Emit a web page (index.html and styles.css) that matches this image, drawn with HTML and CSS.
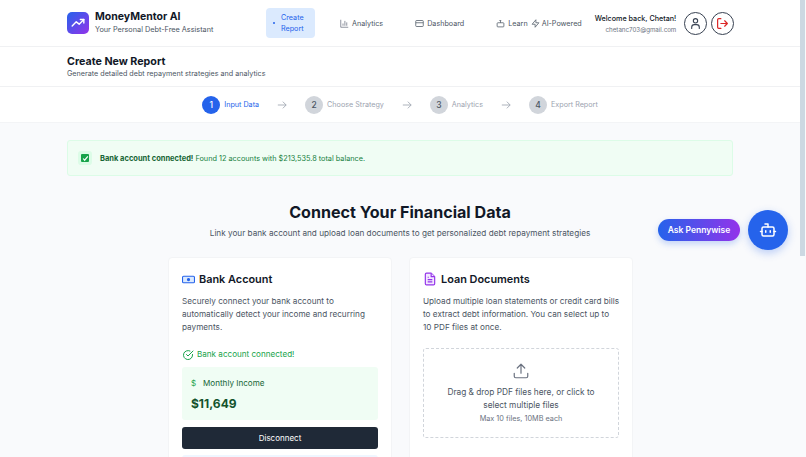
FILE: index.html
```html
<!DOCTYPE html>
<html lang="en">
<head>
  <meta name="viewport" content="width=device-width, initial-scale=1.0">
  <meta charset="UTF-8">
  <title>MoneyMentor AI - Create New Report</title>
  <link rel="stylesheet" href="styles.css">
</head>
<body>
  <div class="page">
    <header class="topbar">
      <div class="brand">
        <div class="brand-logo">
          <svg width="14" height="14" viewBox="0 0 24 24" fill="none" stroke="#fff" stroke-width="2.4" stroke-linecap="round" stroke-linejoin="round"><path d="M2 17l7-7 5 4 8-8"/><path d="M16 6h6v6"/></svg>
        </div>
        <div>
          <div class="brand-name">MoneyMentor AI</div>
          <div class="brand-tag">Your Personal Debt-Free Assistant</div>
        </div>
      </div>
      <nav class="nav">
        <a class="nav-item nav-create"><span class="nav-dot"></span><span>Create<br>Report</span></a>
        <a class="nav-item nav-analytics">
          <svg width="9" height="9" viewBox="0 0 24 24" fill="none" stroke="#6b7280" stroke-width="2"><path d="M2 2v20h20M8 18v-6M13 18V5M18 18v-9"/></svg>
          Analytics
        </a>
        <a class="nav-item nav-dashboard">
          <svg width="9" height="9" viewBox="0 0 24 24" fill="none" stroke="#4b5563" stroke-width="2"><rect x="2" y="4" width="20" height="16" rx="2"/><path d="M2 10h20"/></svg>
          Dashboard
        </a>
        <a class="nav-item nav-learn">
          <svg width="9" height="9" viewBox="0 0 24 24" fill="none" stroke="#4b5563" stroke-width="2"><rect x="3" y="10" width="18" height="11" rx="2"/><path d="M12 10V5M9 4h5"/></svg>
          Learn
        </a>
        <a class="nav-item nav-power">
          <svg width="9" height="9" viewBox="0 0 24 24" fill="none" stroke="#4b5563" stroke-width="2" stroke-linejoin="round"><path d="M13 2v8h8l-10 12v-8H3z"/></svg>
          AI-Powered
        </a>
      </nav>
      <div class="user">
        <div class="user-text">
          <div class="user-name">Welcome back, Chetan!</div>
          <div class="user-mail">chetanc703@gmail.com</div>
        </div>
        <button class="round-btn">
          <svg width="13" height="13" viewBox="0 0 24 24" fill="none" stroke="#374151" stroke-width="2" stroke-linecap="round"><circle cx="12" cy="7" r="4"/><path d="M5 21v-2a5 5 0 0 1 5-5h4a5 5 0 0 1 5 5v2"/></svg>
        </button>
        <button class="round-btn">
          <svg width="13" height="13" viewBox="0 0 24 24" fill="none" stroke="#dc2626" stroke-width="2.2" stroke-linecap="round" stroke-linejoin="round"><path d="M9 3H5a2 2 0 0 0-2 2v14a2 2 0 0 0 2 2h4"/><path d="M9 12h12M16 7l5 5-5 5"/></svg>
        </button>
      </div>
    </header>

    <section class="report-head">
      <h1>Create New Report</h1>
      <p>Generate detailed debt repayment strategies and analytics</p>
    </section>

    <section class="steps">
      <div class="step active"><span class="step-num">1</span>Input Data</div>
      <svg class="step-arrow" width="10" height="10" viewBox="0 0 24 24" fill="none" stroke="#9ca3af" stroke-width="2"><path d="M2 12h20M14 4l8 8-8 8"/></svg>
      <div class="step"><span class="step-num">2</span>Choose Strategy</div>
      <svg class="step-arrow" width="10" height="10" viewBox="0 0 24 24" fill="none" stroke="#9ca3af" stroke-width="2"><path d="M2 12h20M14 4l8 8-8 8"/></svg>
      <div class="step"><span class="step-num">3</span>Analytics</div>
      <svg class="step-arrow" width="10" height="10" viewBox="0 0 24 24" fill="none" stroke="#9ca3af" stroke-width="2"><path d="M2 12h20M14 4l8 8-8 8"/></svg>
      <div class="step"><span class="step-num">4</span>Export Report</div>
    </section>

    <main class="content">
      <div class="alert">
        <span class="alert-check">
          <svg width="7" height="7" viewBox="0 0 24 24" fill="none" stroke="#fff" stroke-width="4"><path d="M4 12l5 6L20 5"/></svg>
        </span>
        <span><b>Bank account connected!</b> Found 12 accounts with $213,535.8 total balance.</span>
      </div>

      <h2 class="title">Connect Your Financial Data</h2>
      <p class="subtitle">Link your bank account and upload loan documents to get personalized debt repayment strategies</p>

      <div class="cards">
        <div class="card">
          <h3 class="card-title">
            <svg width="13" height="13" viewBox="0 0 24 24" fill="#dbeafe" stroke="#2563eb" stroke-width="2"><rect x="1" y="6" width="22" height="12" rx="2"/><circle cx="12" cy="12" r="2" fill="#2563eb"/><path d="M6 12h.01M18 12h.01"/></svg>
            Bank Account
          </h3>
          <p class="card-text">Securely connect your bank account to automatically detect your income and recurring payments.</p>
          <div class="connected">
            <svg width="12" height="12" viewBox="0 0 24 24" fill="none" stroke="#16a34a" stroke-width="2" stroke-linecap="round" stroke-linejoin="round"><path d="M21 11v1a9 9 0 1 1-5-8"/><path d="M9 11l3 3L22 4"/></svg>
            Bank account connected!
          </div>
          <div class="income">
            <div class="income-label"><span class="income-sign">$</span>Monthly Income</div>
            <div class="income-value">$11,649</div>
          </div>
          <button class="disconnect">Disconnect</button>
          <div class="next-box"></div>
        </div>

        <div class="card">
          <h3 class="card-title">
            <svg width="14" height="14" viewBox="0 0 24 24" fill="#f3e8ff" stroke="#9333ea" stroke-width="2" stroke-linejoin="round"><path d="M14 2H6a2 2 0 0 0-2 2v16a2 2 0 0 0 2 2h12a2 2 0 0 0 2-2V8z"/><path d="M14 2v6h6M8 13h8M8 17h8M8 9h2"/></svg>
            Loan Documents
          </h3>
          <p class="card-text">Upload multiple loan statements or credit card bills to extract debt information. You can select up to 10&nbsp;PDF files at once.</p>
          <div class="dropzone">
            <svg width="18" height="18" viewBox="0 0 24 24" fill="none" stroke="#6b7280" stroke-width="1.6" stroke-linecap="round" stroke-linejoin="round"><path d="M21 15v4a2 2 0 0 1-2 2H5a2 2 0 0 1-2-2v-4"/><path d="M17 8l-5-5-5 5M12 3v12"/></svg>
            <div class="drop-text">Drag &amp; drop PDF files here, or click to select multiple files</div>
            <div class="drop-note">Max 10 files, 10MB each</div>
          </div>
        </div>
      </div>
    </main>

    <button class="ask-pill">Ask Pennywise</button>
    <button class="bot-btn">
      <svg width="18" height="18" viewBox="0 0 24 24" fill="none" stroke="#fff" stroke-width="2" stroke-linecap="round" stroke-linejoin="round"><path d="M12 8V4H8"/><rect x="4" y="8" width="16" height="12" rx="2"/><path d="M2 14h2M20 14h2M15 13v2M9 13v2"/></svg>
    </button>
  </div>
  <div class="scroll-rail"></div>
</body>
</html>
```

FILE: styles.css
```css
html, body {
  height: 100%;
}

body {
  margin: 0;
  background: #f9fafc;
  font-family: "Inter", "Liberation Sans", sans-serif;
  color: #111827;
  overflow: hidden;
  display: flex;
  align-items: flex-start;
}

.page {
  position: relative;
  width: 800px;
  flex: none;
}

.scroll-rail {
  width: 5px;
  height: 256px;
  background: #ccd8e2;
}

.topbar {
  height: 46px;
  background: #fff;
  border-bottom: 1px solid #f0f1f3;
  display: flex;
  align-items: center;
  padding-left: 67px;
}

.brand {
  display: flex;
  align-items: center;
  gap: 6px;
  width: 199px;
}

.brand-logo {
  width: 22px;
  height: 22px;
  border-radius: 5px;
  background: linear-gradient(135deg, #2563eb, #9333ea);
  display: flex;
  align-items: center;
  justify-content: center;
}

.brand-name {
  font-size: 10.5px;
  font-weight: 700;
  line-height: 14px;
}

.brand-tag {
  font-size: 7.3px;
  line-height: 12px;
  color: #4b5563;
}

.nav {
  display: flex;
  align-items: center;
}

.nav-item {
  display: flex;
  align-items: center;
  gap: 3px;
  font-size: 7.2px;
  color: #4b5563;
}

.nav-create {
  width: 49px;
  height: 30px;
  box-sizing: border-box;
  padding-left: 7px;
  gap: 6px;
  border-radius: 4px;
  background: #dbeafe;
  color: #2563eb;
  line-height: 11px;
}

.nav-dot {
  width: 2px;
  height: 2px;
  border-radius: 50%;
  background: #2563eb;
}

.nav-analytics {
  margin-left: 25px;
}

.nav-dashboard {
  margin-left: 32px;
}

.nav-learn {
  margin-left: 32px;
}

.nav-power {
  margin-left: 3px;
  gap: 2px;
}

.user {
  display: flex;
  align-items: center;
  margin-left: 13px;
}

.user-text {
  text-align: right;
  margin-right: 8px;
}

.user-name {
  font-size: 7.2px;
  line-height: 12px;
  font-weight: 500;
}

.user-mail {
  font-size: 6.2px;
  line-height: 9px;
  color: #6b7280;
}

.round-btn {
  width: 23px;
  height: 23px;
  padding: 0;
  margin-right: 4px;
  border: 1px solid #374151;
  border-radius: 50%;
  background: #fff;
  display: flex;
  align-items: center;
  justify-content: center;
}

.report-head {
  height: 39px;
  background: #fff;
  border-bottom: 1px solid #f0f1f3;
  padding-left: 67px;
}

.report-head h1 {
  margin: 0;
  padding-top: 8px;
  font-size: 10.7px;
  line-height: 13px;
  font-weight: 700;
}

.report-head p {
  margin: 0;
  font-size: 7.2px;
  line-height: 12px;
  color: #4b5563;
}

.steps {
  height: 35px;
  background: #fff;
  border-bottom: 1px solid #f3f4f6;
  display: flex;
  align-items: center;
  justify-content: center;
  font-size: 7.2px;
  color: #9ca3af;
  gap: 18px;
}

.step {
  display: flex;
  align-items: center;
  gap: 4px;
}

.step-num {
  width: 18px;
  height: 18px;
  border-radius: 50%;
  background: #d1d5db;
  color: #4b5563;
  display: flex;
  align-items: center;
  justify-content: center;
  font-size: 8.5px;
  font-weight: 500;
}

.step.active {
  color: #2563eb;
}

.step.active .step-num {
  background: #2563eb;
  color: #fff;
}

.content {
  padding: 17px 67px 0;
}

.alert {
  height: 34px;
  background: #f0fdf4;
  border: 1px solid #dcfce7;
  border-radius: 3px;
  display: flex;
  align-items: center;
  gap: 11px;
  padding-left: 13px;
  font-size: 7.3px;
  color: #15803d;
}

.alert b {
  font-size: 7.5px;
  color: #166534;
}

.alert-check {
  width: 8px;
  height: 8px;
  border-radius: 1px;
  background: #16a34a;
  box-shadow: 0 0 0 3px #dcfce7;
  display: flex;
  align-items: center;
  justify-content: center;
}

.title {
  margin: 26px 0 0;
  text-align: center;
  font-size: 16.1px;
  line-height: 20px;
  font-weight: 700;
}

.subtitle {
  margin: 5px 0 0;
  text-align: center;
  font-size: 8.2px;
  line-height: 13px;
  color: #4b5563;
}

.cards {
  display: flex;
  gap: 17px;
  margin: 17px 0 0 101px;
}

.card {
  width: 224px;
  height: 300px;
  box-sizing: border-box;
  background: #fff;
  border: 1px solid #f3f4f6;
  border-radius: 4px;
  padding: 14px 13px;
}

.card-title {
  margin: 0;
  display: flex;
  align-items: center;
  gap: 4px;
  font-size: 10.9px;
  line-height: 14px;
  font-weight: 600;
}

.card-text {
  margin: 9px -2px 0 0;
  font-size: 8.2px;
  line-height: 13px;
  color: #4b5563;
}

.connected {
  margin-top: 14px;
  display: flex;
  align-items: center;
  gap: 3px;
  font-size: 8.1px;
  line-height: 13px;
  color: #16a34a;
}

.income {
  margin-top: 6px;
  height: 53px;
  box-sizing: border-box;
  padding: 10px 9px 0;
  background: #f0fdf4;
  border-radius: 3px;
}

.income-label {
  display: flex;
  align-items: center;
  font-size: 8.1px;
  line-height: 12px;
  color: #166534;
}

.income-sign {
  color: #16a34a;
  width: 12px;
}

.income-value {
  margin-top: 7px;
  font-size: 12px;
  line-height: 16px;
  font-weight: 700;
  color: #14532d;
}

.disconnect {
  margin-top: 7px;
  width: 100%;
  height: 22px;
  border: none;
  border-radius: 3px;
  background: #1f2937;
  color: #fff;
  font-family: inherit;
  font-size: 8px;
  display: block;
}

.next-box {
  margin-top: 6px;
  height: 30px;
  background: #eff6ff;
  border-radius: 3px;
}

.dropzone {
  margin-top: 14px;
  height: 90px;
  box-sizing: border-box;
  border: 1px dashed #d1d5db;
  border-radius: 3px;
  padding-top: 13px;
  display: flex;
  flex-direction: column;
  align-items: center;
  text-align: center;
}

.drop-text {
  margin-top: 6px;
  width: 170px;
  font-size: 8.3px;
  line-height: 13px;
  color: #4b5563;
}

.drop-note {
  margin-top: 1px;
  font-size: 7.3px;
  line-height: 11px;
  color: #6b7280;
}

.ask-pill {
  position: absolute;
  left: 658px;
  top: 219px;
  width: 82px;
  height: 22px;
  padding: 0;
  border: none;
  border-radius: 11px;
  background: linear-gradient(90deg, #2563eb, #9333ea);
  box-shadow: 0 3px 6px rgba(37, 99, 235, 0.25);
  color: #fff;
  font-family: inherit;
  font-size: 8.5px;
  font-weight: 600;
}

.bot-btn {
  position: absolute;
  left: 748px;
  top: 210px;
  width: 40px;
  height: 40px;
  padding: 0;
  border: none;
  border-radius: 50%;
  background: #2563eb;
  box-shadow: 0 3px 8px rgba(37, 99, 235, 0.3);
  display: flex;
  align-items: center;
  justify-content: center;
}
```
